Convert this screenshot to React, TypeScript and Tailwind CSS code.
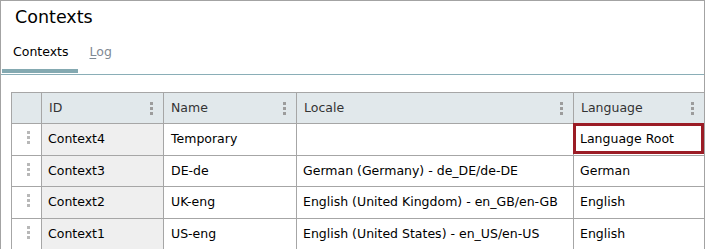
import React from 'react';

type Row = {
  id: string;
  name: string;
  locale: string;
  language: string;
  selected?: boolean;
};

const rows: Row[] = [
  { id: 'Context4', name: 'Temporary', locale: '', language: 'Language Root', selected: true },
  { id: 'Context3', name: 'DE-de', locale: 'German (Germany) - de_DE/de-DE', language: 'German' },
  { id: 'Context2', name: 'UK-eng', locale: 'English (United Kingdom) - en_GB/en-GB', language: 'English' },
  { id: 'Context1', name: 'US-eng', locale: 'English (United States) - en_US/en-US', language: 'English' },
];

const rowHeights = ['h-[32px]', 'h-[31px]', 'h-[32px]', 'h-[31px]'];

const cols = 'grid grid-cols-[30px_122px_133px_277px_131px]';

// three stacked dots, used in headers and as row handles
const Kebab = ({ light }: { light?: boolean }) => (
  <div className="flex flex-col gap-[2px]">
    {[0, 1, 2].map((i) => (
      <span
        key={i}
        className={light ? 'block w-[3px] h-[3px] bg-[#b8b8b8]' : 'block w-[3px] h-[3px] bg-[#9c9c9c]'}
      />
    ))}
  </div>
);

const HeaderCell = ({ label }: { label: string }) => (
  <div className="flex items-center justify-between border-l border-[#a6a6a6] pl-[7px] pr-[10px] text-[#333]">
    <span>{label}</span>
    <Kebab />
  </div>
);

export default function App() {
  return (
    <div className="w-[705px] h-[249px] overflow-hidden bg-white border-l border-t border-r border-[#a3a3a3] font-['DejaVu_Sans',sans-serif] text-[12.5px] text-black">
      {/* Title */}
      <div className="pt-[4px] pl-[14px] text-[17.5px] leading-[24px]">Contexts</div>

      {/* Tabs */}
      <div className="flex pl-[1px] pb-[1px] border-b border-[#8aaeb7]">
        <div className="pt-[13px] pb-[7px] pl-[11px] pr-[10px] leading-[20px] border-b-[4px] border-[#84a9b1]">
          Contexts
        </div>
        <div className="pt-[13px] pb-[7px] pl-[11px] pr-[10px] leading-[20px] border-b-[4px] border-transparent text-[#7f8993]">
          <span className="underline underline-offset-[2px]">L</span>og
        </div>
      </div>

      {/* Table */}
      <div className="mt-[17px] ml-[10px] border-t border-[#a6a6a6]">
        <div className={`${cols} h-[31px] bg-[#e1e8eb] border-b border-[#a6a6a6]`}>
          <div className="border-l border-[#a6a6a6]" />
          <HeaderCell label="ID" />
          <HeaderCell label="Name" />
          <HeaderCell label="Locale" />
          <HeaderCell label="Language" />
        </div>

        {rows.map((r, i) => (
          <div key={r.id} className={`${cols} ${rowHeights[i]} border-b border-[#a6a6a6]`}>
            <div className="flex items-center justify-center pl-[3px] pb-[4px] border-l border-[#a6a6a6]">
              <Kebab light />
            </div>
            <div className="flex items-center pl-[6px] bg-[#efefef] border-l border-[#a6a6a6]">{r.id}</div>
            <div className="flex items-center pl-[7px] border-l border-[#a6a6a6]">{r.name}</div>
            <div className="flex items-center pl-[6px] border-l border-[#a6a6a6] whitespace-nowrap">{r.locale}</div>
            <div className="relative flex items-center pl-[6px] border-l border-[#a6a6a6] whitespace-nowrap">
              {r.selected && (
                <div className="absolute left-[-1px] top-[-1px] right-0 bottom-[1px] border-[3px] border-[#9b1c25]" />
              )}
              <span className="relative">{r.language}</span>
            </div>
          </div>
        ))}
      </div>
    </div>
  );
}
